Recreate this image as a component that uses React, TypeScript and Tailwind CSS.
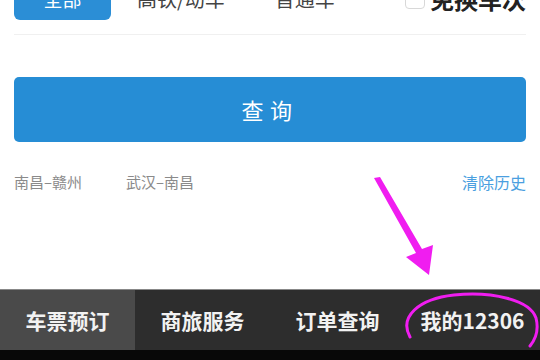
import React from 'react';

const cjk = 'font-["Noto_Sans_CJK_SC","Noto_Sans",sans-serif]';

const tabs = ['车票预订', '商旅服务', '订单查询', '我的12306'];

function Annotation() {
  // magenta pen marks drawn over the screenshot
  return (
    <svg
      className="pointer-events-none absolute inset-0"
      width={540}
      height={360}
      viewBox="0 0 540 360"
    >
      <path d="M374 178 L380 177 L422 249 L433 245 L429 275 L406 257 L416 253 Z" fill="#f01df0" />
      <path
        d="M410 337 C399 317 418 299 454 295 C492 291 530 300 536 318 C539 330 535 340 530 346"
        fill="none"
        stroke="#f01df0"
        strokeWidth={3}
        strokeLinecap="round"
      />
    </svg>
  );
}

export default function App() {
  return (
    <div className={`relative flex h-[360px] w-[540px] flex-col overflow-hidden bg-white ${cjk}`}>
      <div className="px-[14px]">
        <div className="-mt-[22px] flex h-[42px] items-center">
          <div className="flex h-full w-[97px] items-center justify-center rounded-[6px] bg-[#2b8ed6] text-[19px] text-white">
            全部
          </div>
          <span className="ml-[26px] text-[20px] text-[#444]">高铁/动车</span>
          <span className="ml-[50px] text-[20px] text-[#444]">普通车</span>
          <div className="ml-auto flex items-center gap-[5px]">
            <span className="h-[20px] w-[20px] rounded-[4px] border border-[#d8d8d8]" />
            <span className="text-[24px] font-bold text-[#222]">免换车次</span>
          </div>
        </div>
        <div className="mt-[14px] h-px bg-[#f0f0f0]" />
        <button
          type="button"
          className="mt-[42px] flex h-[65px] w-full items-center justify-center rounded-[5px] bg-[#268dd5] text-[22px] tracking-[0.3em] text-white"
        >
          查询
        </button>
        <div className="mt-[28px] flex items-center text-[15px] text-[#8a8a8a]">
          <span>南昌–赣州</span>
          <span className="ml-[44px]">武汉–南昌</span>
          <span className="ml-auto text-[16px] text-[#4b9fe0]">清除历史</span>
        </div>
      </div>

      <div className="flex-1" />

      <div className="grid h-[61px] grid-cols-4 border-t border-[#888] bg-[#2d2d2d]">
        {tabs.map((t, i) => (
          <div
            key={t}
            className={`flex items-center justify-center pt-[2px] text-[21px] font-bold text-[#f2f2f2] ${
              i === 0 ? 'bg-[#4a4a4a]' : ''
            }`}
          >
            {t}
          </div>
        ))}
      </div>
      <div className="h-[10px] bg-[#080808]" />

      <Annotation />
    </div>
  );
}
